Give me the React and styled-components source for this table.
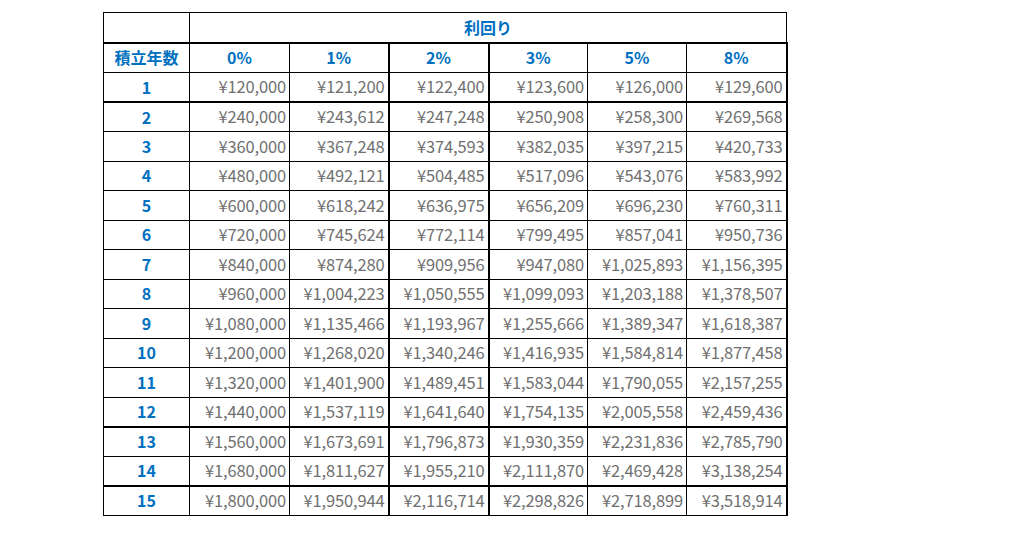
import React from "react";
import styled, { createGlobalStyle } from "styled-components";

const GlobalStyle = createGlobalStyle`
  html, body {
    margin: 0;
    background: #ffffff;
  }
  body {
    font-family: "Noto Sans CJK JP", "Noto Sans", sans-serif;
  }
`;

const rates = ["0%", "1%", "2%", "3%", "5%", "8%"];
const colWidths = [86, 100, 99, 100, 99, 99, 100];

const rows = [
  ["120,000", "121,200", "122,400", "123,600", "126,000", "129,600"],
  ["240,000", "243,612", "247,248", "250,908", "258,300", "269,568"],
  ["360,000", "367,248", "374,593", "382,035", "397,215", "420,733"],
  ["480,000", "492,121", "504,485", "517,096", "543,076", "583,992"],
  ["600,000", "618,242", "636,975", "656,209", "696,230", "760,311"],
  ["720,000", "745,624", "772,114", "799,495", "857,041", "950,736"],
  ["840,000", "874,280", "909,956", "947,080", "1,025,893", "1,156,395"],
  ["960,000", "1,004,223", "1,050,555", "1,099,093", "1,203,188", "1,378,507"],
  ["1,080,000", "1,135,466", "1,193,967", "1,255,666", "1,389,347", "1,618,387"],
  ["1,200,000", "1,268,020", "1,340,246", "1,416,935", "1,584,814", "1,877,458"],
  ["1,320,000", "1,401,900", "1,489,451", "1,583,044", "1,790,055", "2,157,255"],
  ["1,440,000", "1,537,119", "1,641,640", "1,754,135", "2,005,558", "2,459,436"],
  ["1,560,000", "1,673,691", "1,796,873", "1,930,359", "2,231,836", "2,785,790"],
  ["1,680,000", "1,811,627", "1,955,210", "2,111,870", "2,469,428", "3,138,254"],
  ["1,800,000", "1,950,944", "2,116,714", "2,298,826", "2,718,899", "3,518,914"],
];

// which column / row edges are drawn heavier
const thickRight = [false, true, true, false, false, true, false];
const thickBottomRows = [0, 11, 13];

const Page = styled.div`
  padding: 12px 0 0 103px;
`;

const Table = styled.table`
  border-collapse: collapse;
  table-layout: fixed;
  width: 683px;
`;

const Col = styled.col`
  width: ${(p) => p.$w}px;
`;

const Cell = styled.td`
  border: 1px solid #000;
  border-right-width: ${(p) => (p.$thickRight ? "2px" : "1px")};
  border-bottom-width: ${(p) => (p.$thickBottom ? "2px" : "1px")};
  padding: 0 3px 1px 0;
  height: ${(p) => p.$h || 29}px;
  box-sizing: border-box;
  white-space: nowrap;
  line-height: 1;
`;

const HeadCell = styled(Cell)`
  text-align: center;
  color: #0070c0;
  font-weight: 700;
  font-size: 16px;
  padding: 0 0 1px 0;
`;

const NumCell = styled(Cell)`
  text-align: right;
  color: #707070;
  font-size: 16.5px;
  letter-spacing: -0.15px;
`;

export default function App() {
  return (
    <Page>
      <GlobalStyle />
      <Table>
        <colgroup>
          {colWidths.map((w, i) => (
            <Col key={i} $w={w} />
          ))}
        </colgroup>
        <tbody>
          <tr>
            <HeadCell $h={30} $thickBottom />
            <HeadCell $h={30} colSpan={6} $thickBottom>
              利回り
            </HeadCell>
          </tr>
          <tr>
            <HeadCell $h={30}>積立年数</HeadCell>
            {rates.map((r, i) => (
              <HeadCell key={r} $h={30} $thickRight={thickRight[i]}>
                {r}
              </HeadCell>
            ))}
          </tr>
          {rows.map((row, ri) => (
            <tr key={ri}>
              <HeadCell $h={29.5} $thickBottom={thickBottomRows.includes(ri)}>
                {ri + 1}
              </HeadCell>
              {row.map((v, ci) => (
                <NumCell
                  key={ci}
                  $h={29.5}
                  $thickRight={thickRight[ci]}
                  $thickBottom={thickBottomRows.includes(ri)}
                >
                  ¥{v}
                </NumCell>
              ))}
            </tr>
          ))}
        </tbody>
      </Table>
    </Page>
  );
}
